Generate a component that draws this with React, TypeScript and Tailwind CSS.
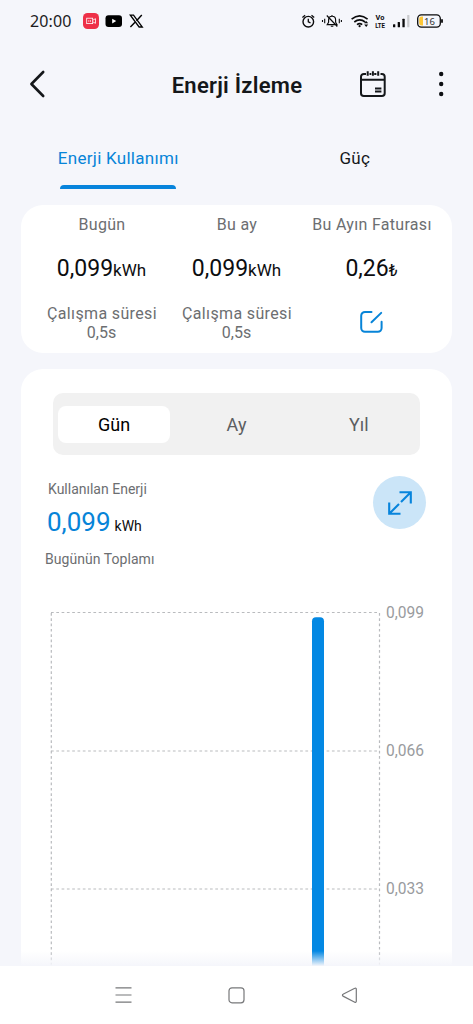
import { useState } from 'react';

const stats = [
  { label: 'Bugün', value: '0,099', unit: 'kWh', runtime: '0,5s' },
  { label: 'Bu ay', value: '0,099', unit: 'kWh', runtime: '0,5s' },
];

const gridLines = [
  { y: 12.5, label: '0,099' },
  { y: 151, label: '0,066' },
  { y: 289, label: '0,033' },
];

const ranges = ['Gün', 'Ay', 'Yıl'];

function StatusBar() {
  return (
    <div className="flex h-[42px] items-center pl-[30px] pr-[29px] text-black">
      <span className="w-[53px] font-['Noto_Sans','Open_Sans',sans-serif] text-[16px] tracking-[0.15px] text-[#1c1c1e]">20:00</span>
      {/* 通知アイコン */}
      <svg className="h-4 w-[61px]" viewBox="0 0 61 16" fill="none">
        <rect x="0" y="0" width="16" height="16" rx="4.5" fill="#ee3048" />
        <rect x="3.7" y="5.2" width="6" height="5.4" stroke="#fff" strokeWidth="0.8" />
        <path d="M9.7 7.2l2.8-1.5v4.6L9.7 8.8" stroke="#fff" strokeWidth="0.8" />
        <path d="M5.8 7v2M7.5 7v2" stroke="#fff" strokeWidth="0.6" />
        <rect x="22.5" y="2.2" width="16.5" height="11.8" rx="3" fill="#000" />
        <path d="M29.2 5.8v4.6l4-2.3z" fill="#fff" />
        <path d="M47.3 2.2h3.2l8.8 11.8h-3.2z" stroke="#000" strokeWidth="1.3" />
        <path d="M58.8 2l-5.3 5.7M52 9.2L47.4 14" stroke="#000" strokeWidth="1.4" />
      </svg>
      <svg className="ml-auto h-5 w-[142px]" viewBox="302 11 142 20" fill="none" stroke="#0b0b0c">
        {/* アラーム */}
        <circle cx="308.3" cy="21.7" r="5.3" strokeWidth="1.4" />
        <path d="M308.3 18.7v3.2l2.2 1M302.4 17.5l2.7-2.2M314.2 17.5l-2.7-2.2" strokeWidth="1.3" />
        {/* ミュート */}
        <path d="M327.2 24.6h9.8l-1.4-2.4v-2.5a3.5 3.5 0 0 0-7 0v2.5zM332 15v1M330.8 26.2h2.5M326.8 15.5l10.5 11" strokeWidth="1.15" />
        <path d="M324.7 18.8v4.4M322.5 20v2M339.3 18.8v4.4M341.4 20v2" strokeWidth="1.1" />
        {/* Wi-Fi */}
        <path d="M351.6 19.2q8-6.6 16 0M354.3 22q5.4-4.2 10.8 0M357 24.6q2.7-2 5.2 0" strokeWidth="1.6" />
        <circle cx="359.6" cy="26.2" r="1.1" fill="#0b0b0c" stroke="none" />
        <path d="M364.2 23.3l2-2.3 2 2.3zM364.2 24.6l2 2.3 2-2.3z" fill="#0b0b0c" stroke="none" />
        <g fill="#0b0b0c" stroke="none" fontFamily="Roboto, sans-serif" fontWeight="700" fontSize="7.6">
          <text x="375.6" y="20.2" textLength="8.8" lengthAdjust="spacingAndGlyphs">Vo</text>
          <text x="375.2" y="27.6" textLength="9.8" lengthAdjust="spacingAndGlyphs">LTE</text>
        </g>
        {/* 電波 */}
        <g stroke="none" fill="#0b0b0c">
          <rect x="393" y="24.2" width="2.3" height="3" rx="0.5" />
          <rect x="397.7" y="21.9" width="2.3" height="5.3" rx="0.5" />
          <rect x="402.4" y="18.8" width="2.3" height="8.4" rx="0.5" />
          <rect x="407.2" y="15" width="2.2" height="12.2" rx="0.5" fill="#c9cacd" />
        </g>
        {/* バッテリー */}
        <rect x="417.7" y="14.9" width="22.6" height="12.2" rx="3.6" strokeWidth="1.3" />
        <path d="M423 16.4v9.2h-1.4a2.4 2.4 0 0 1-2.4-2.4v-4.4a2.4 2.4 0 0 1 2.4-2.4z" fill="#fdc736" stroke="none" />
        <path d="M442 19.2v3.6" strokeWidth="1.8" />
        <text x="424" y="24.5" fill="#333" stroke="none" fontFamily="'Noto Sans', sans-serif" fontSize="9.5">16</text>
      </svg>
    </div>
  );
}

function Header() {
  return (
    <header className="grid h-[84px] grid-cols-[1fr_auto_1fr] items-center pl-[28px] pr-[27px]">
      <svg className="h-7 w-5" viewBox="0 0 20 28" fill="none" stroke="#14171a" strokeWidth="2.6" strokeLinecap="round" strokeLinejoin="round">
        <path d="M15.2 2L3.4 14l11.8 12" />
      </svg>
      <h1 className="pt-[3px] text-[22px] font-semibold tracking-[0.26px]">Enerji İzleme</h1>
      <div className="flex items-center justify-end gap-[49px]">
        <svg className="h-[28px] w-[28px]" viewBox="0 0 28 28" fill="none" stroke="#14171a" strokeWidth="2">
          <path d="M7 4H4.8A2.8 2.8 0 0 0 2 6.8v16.5a2.8 2.8 0 0 0 2.8 2.8h18.1a2.8 2.8 0 0 0 2.8-2.8V6.8A2.8 2.8 0 0 0 22.9 4h-1.4M10.5 4h1.8M15.2 4h2.2M2 9.7h23.7M8.7 1.2v4.6M13.9 1.2v4.6M19.2 1.2v4.6" />
          <path d="M16 18.6h6.4M16 21.6h6.4" />
        </svg>
        <svg className="h-[28px] w-[10px]" viewBox="0 0 10 28" fill="#0e1013">
          <circle cx="5.2" cy="4" r="2.2" />
          <circle cx="5.2" cy="14" r="2.2" />
          <circle cx="5.2" cy="24" r="2.2" />
        </svg>
      </div>
    </header>
  );
}

function UsageChart() {
  return (
    <svg className="mt-auto block h-[366px] w-full shrink-0" viewBox="21 0 431 366">
      <g fill="none" stroke="#b9bbbe" strokeWidth="1.2" strokeDasharray="2.7 2.6">
        {gridLines.map((line) => (
          <path key={line.label} d={`M51 ${line.y}H379.5`} />
        ))}
        <path d="M51.3 13V366M379.5 13V366" />
      </g>
      <g fill="#999b9e" fontFamily="Roboto, sans-serif" fontSize="15.6">
        {gridLines.map((line) => (
          <text key={line.label} x="386" y={line.y + 5} textLength="38" lengthAdjust="spacingAndGlyphs">
            {line.label}
          </text>
        ))}
      </g>
      <path d="M312 366V21.3a4 4 0 0 1 4-4h4a4 4 0 0 1 4 4V366z" fill="#0388e3" />
    </svg>
  );
}

export default function App() {
  const [range, setRange] = useState('Gün');

  return (
    <div className="flex h-[1024px] w-[473px] flex-col overflow-hidden bg-[#f5f6fb] font-[Roboto,sans-serif] text-[#14171a]">
      <StatusBar />
      <Header />

      {/* タブ */}
      <nav className="grid h-[63px] shrink-0 grid-cols-2 text-[17px] leading-5">
        <div className="flex flex-col items-center justify-between pt-[22px] text-[#0784d8]">
          <span className="tracking-[0.28px]">Enerji Kullanımı</span>
          <span className="h-1 w-[116px] rounded-t-[4px] bg-[#0784dc]" />
        </div>
        <div className="pt-[22px] text-center tracking-[0.28px]">Güç</div>
      </nav>

      {/* 集計カード */}
      <section className="mx-[21px] mt-4 grid h-[148px] shrink-0 grid-cols-3 rounded-[22px] bg-white px-[13px] pt-[10px] text-center">
        {stats.map((stat) => (
          <div key={stat.label} className="flex flex-col text-[16px] text-[#6c6e71]">
            <span className="pl-px leading-5 tracking-[0.3px]">{stat.label}</span>
            <span className="mt-[20px] text-[23px] leading-7 text-[#0c0d0f]">
              {stat.value}<span className="text-[17px]">{stat.unit}</span>
            </span>
            <span className="mt-[20px] pl-px leading-[19px] tracking-[0.36px]">Çalışma süresi</span>
            <span className="leading-[19px]">{stat.runtime}</span>
          </div>
        ))}
        <div className="flex flex-col items-center text-[16px] text-[#6c6e71]">
          <span className="whitespace-nowrap pl-px leading-5 tracking-[0.3px]">Bu Ayın Faturası</span>
          <span className="mt-[20px] text-[23px] leading-7 text-[#0c0d0f]">
            0,26<span className="text-[16px]">₺</span>
          </span>
          <svg className="mt-[25px] h-6 w-6" viewBox="0 0 24 24" fill="none" stroke="#0784d8" strokeWidth="2" strokeLinecap="round">
            <path d="M11.5 1.9H5a3.8 3.8 0 0 0-3.8 3.8V18A3.8 3.8 0 0 0 5 21.8h12.8a3.8 3.8 0 0 0 3.8-3.8v-6.2M11.5 12.3L21.2 2.9" />
          </svg>
        </div>
      </section>

      {/* グラフカード */}
      <section className="relative mx-[21px] mt-4 flex h-[597px] shrink-0 flex-col rounded-t-[22px] bg-white">
        <div className="ml-8 mt-6 grid h-[62px] w-[367px] shrink-0 grid-cols-3 items-center rounded-[10px] bg-[#f1f1f1]">
          {ranges.map((item) => (
            <button
              key={item}
              onClick={() => setRange(item)}
              className={`mx-[5px] h-[37px] rounded-[8px] text-[18px] ${item === range ? 'bg-white text-black' : 'text-[#5c5e61]'}`}
            >
              {item}
            </button>
          ))}
        </div>

        <div className="flex justify-between pl-[24px] pr-[26px] pt-[21px]">
          <div className="flex flex-col">
            <span className="ml-[3px] mt-[5px] text-[14px] leading-4 text-[#6c6e71]">Kullanılan Enerji</span>
            <span className="ml-[2px] mt-[10px] text-[26px] leading-[30px] text-[#0784d8]">
              0,099<span className="ml-[4px] text-[14px] text-[#0c0d0f]">kWh</span>
            </span>
            <span className="mt-[10px] text-[14px] leading-4 tracking-[0.05px] text-[#6c6e71]">Bugünün Toplamı</span>
          </div>
          <button className="flex h-[53px] w-[53px] items-center justify-center rounded-full bg-[#cbe5f8]">
            <svg className="h-6 w-6" viewBox="0 0 24 24" fill="none" stroke="#0784dc" strokeWidth="2.1">
              <path d="M11.5 1.2h11.3v11.3M22.5 1.5L13 11M1.2 11.5v11.3h11.3M1.5 22.5L11 13" />
            </svg>
          </button>
        </div>

        <UsageChart />
        <div className="pointer-events-none absolute inset-x-0 bottom-0 h-[15px] bg-linear-to-b from-[#f5f6fb]/0 to-[#f5f6fb]" />
      </section>

      {/* ナビゲーションバー */}
      <footer className="flex h-[58px] shrink-0 items-center justify-center gap-[96px] bg-white">
        <svg className="h-[18px] w-[17px]" viewBox="0 0 17 18" stroke="#77787a" strokeWidth="1.2">
          <path d="M.5 1.8H16.5M.5 9H16.5M.5 16.2H16.5" />
        </svg>
        <svg className="h-[17px] w-[17px]" viewBox="0 0 17 17" fill="none" stroke="#77787a" strokeWidth="1.2">
          <rect x="1" y="0.8" width="15" height="15" rx="3" />
        </svg>
        <svg className="h-[17px] w-[17px]" viewBox="0 0 17 17" fill="none" stroke="#77787a" strokeWidth="1.2" strokeLinejoin="round">
          <path d="M13.8 1.2L2 7.3a1 1 0 0 0 0 1.8l11.8 6.1a1 1 0 0 0 1.5-.9V2.1a1 1 0 0 0-1.5-.9z" />
        </svg>
      </footer>
    </div>
  );
}
